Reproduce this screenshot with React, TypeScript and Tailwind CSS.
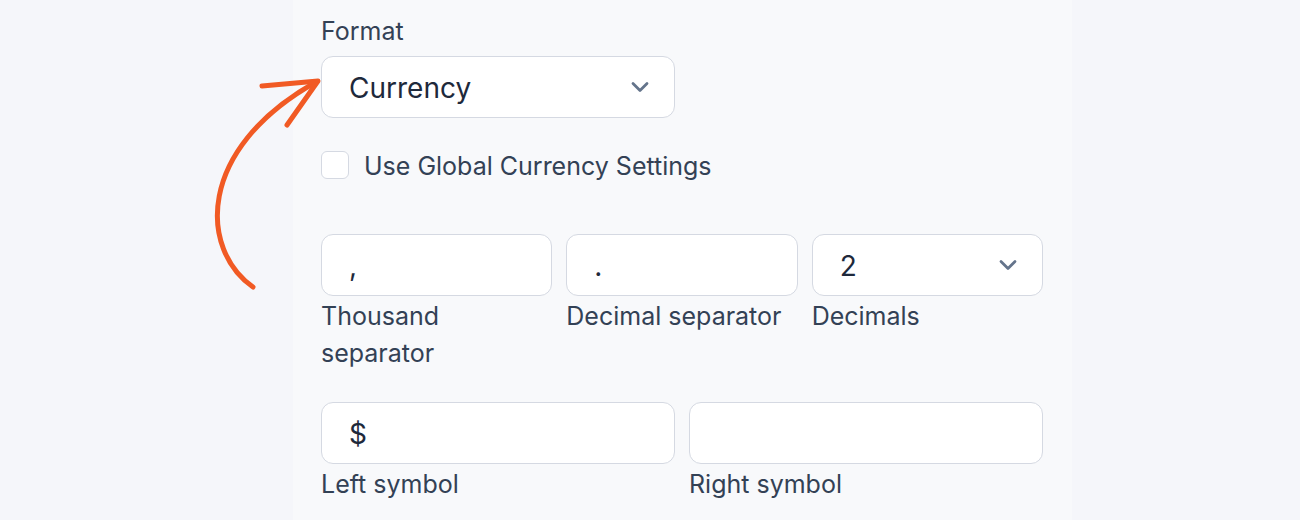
import React from 'react';

const Chevron = () => (
  <svg width="20" height="12" viewBox="0 0 20 12" fill="none" className="shrink-0">
    <path d="M3 2.5l7 7 7-7" stroke="#64748b" strokeWidth="2.8" strokeLinecap="round" strokeLinejoin="round" />
  </svg>
);

const Box = ({ value, chevron }: { value?: string; chevron?: boolean }) => (
  <div className="h-[62px] w-full rounded-[12px] border border-[#d5d9e2] bg-white pl-[27px] pr-[24px] flex items-center justify-between text-[28px] text-[#1e293b]">
    <span className="pt-[2px]">{value}</span>
    {chevron && <Chevron />}
  </div>
);

const Field = ({ value, label, chevron }: { value?: string; label: string; chevron?: boolean }) => (
  <div className="flex flex-col">
    <Box value={value} chevron={chevron} />
    <div className="pt-[2px] text-[25px] leading-[37px] text-[#334155]">{label}</div>
  </div>
);

const Arrow = () => (
  <svg width="140" height="260" viewBox="190 60 140 260" className="absolute left-[190px] top-[60px]" fill="none">
    <path d="M253 287 C 200 250, 195 150, 316 82" stroke="#f15a24" strokeWidth="5" strokeLinecap="round" />
    <path d="M262 86 L318 81 L287 125" stroke="#f15a24" strokeWidth="5" strokeLinecap="round" strokeLinejoin="round" />
  </svg>
);

export default function App() {
  return (
    <div className="relative w-[1300px] h-[520px] bg-[#f5f6fa] flex overflow-hidden" style={{ fontFamily: 'Inter, "Noto Sans", sans-serif' }}>
      <div className="w-[779px] ml-[293px] bg-[#f8f9fb] pt-[13px] px-[28px]">
        <div className="text-[25px] leading-[37px] text-[#334155] mb-[6px]">Format</div>
        <div className="w-[354px]">
          <Box value="Currency" chevron />
        </div>
        <div className="mt-[33px] flex items-center gap-[15px] h-[28px]">
          <div className="w-[28px] h-[28px] rounded-[6px] border border-[#d5d9e2] bg-white" />
          <span className="pt-[2px] text-[25px] leading-[28px] text-[#334155]">Use Global Currency Settings</span>
        </div>
        <div className="mt-[55px] grid grid-cols-3 gap-x-[14px] w-[722px]">
          <Field value="," label="Thousand separator" />
          <Field value="." label="Decimal separator" />
          <Field value="2" label="Decimals" chevron />
        </div>
        <div className="mt-[30px] grid grid-cols-2 gap-x-[14px] w-[722px]">
          <Field value="$" label="Left symbol" />
          <Field value="" label="Right symbol" />
        </div>
      </div>
      <Arrow />
    </div>
  );
}
